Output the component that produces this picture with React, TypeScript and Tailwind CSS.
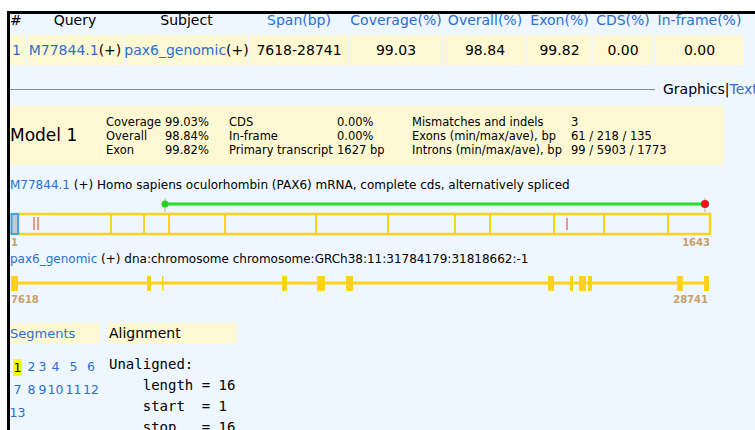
import type { ReactNode } from "react"

const LINK = "text-[#2c6fd1]"
const GOLD = "#ffd21a"

type Col = { w: string; head: string; headBlue: boolean; left?: boolean; cell: ReactNode }

const columns: Col[] = [
  { w: "w-[15px]", head: "#", headBlue: false, left: true, cell: <span className={LINK}>1</span> },
  {
    w: "w-[96px]",
    head: "Query",
    headBlue: false,
    cell: (
      <>
        <span className={LINK}>M77844.1</span>(+)
      </>
    ),
  },
  {
    w: "w-[123px]",
    head: "Subject",
    headBlue: false,
    cell: (
      <>
        <span className={LINK}>pax6_genomic</span>(+)
      </>
    ),
  },
  { w: "w-[98px]", head: "Span(bp)", headBlue: true, cell: "7618-28741" },
  { w: "w-[92px]", head: "Coverage(%)", headBlue: true, cell: "99.03" },
  { w: "w-[82px]", head: "Overall(%)", headBlue: true, cell: "98.84" },
  { w: "w-[63px]", head: "Exon(%)", headBlue: true, cell: "99.82" },
  { w: "w-[60px]", head: "CDS(%)", headBlue: true, cell: "0.00" },
  { w: "w-[89px]", head: "In-frame(%)", headBlue: true, cell: "0.00" },
]

// model summary, three rows of label/value pairs
const stats = [
  ["Coverage", "99.03%", "CDS", "0.00%", "Mismatches and indels", "3"],
  ["Overall", "98.84%", "In-frame", "0.00%", "Exons (min/max/ave), bp", "61 / 218 / 135"],
  ["Exon", "99.82%", "Primary transcript", "1627 bp", "Introns (min/max/ave), bp", "99 / 5903 / 1773"],
]

// exon boundaries on the mRNA bar (svg x)
const dividers = [101, 134, 159, 215, 306, 378, 445, 480, 544, 594, 658]

// exons on the genomic strip, [start, end] in svg x
const exons: [number, number][] = [
  [1, 8],
  [137, 141],
  [272, 277],
  [307, 315],
  [336, 343],
  [538, 544],
  [560, 563],
  [569, 576],
  [578, 582],
  [667, 673],
  [694, 699],
]

const segRows = [
  ["1", "2", "3", "4", "5", "6"],
  ["7", "8", "9", "10", "11", "12"],
  ["13"],
]
const segWidths = ["w-[15px]", "w-[13px]", "w-[9px]", "w-[17px]", "w-[19px]", "w-[16px]"]

function MrnaTrack() {
  return (
    <svg width="745" height="42" className="block">
      <line x1="155" y1="3" x2="155" y2="17" stroke="#d2d2d2" strokeWidth="2" />
      <line x1="695" y1="3" x2="695" y2="17" stroke="#d2d2d2" strokeWidth="2" />
      <line x1="155" y1="9" x2="695" y2="9" stroke="#22e022" strokeWidth="3" />
      <circle cx="155" cy="9" r="3.5" fill="#1fd41f" />
      <circle cx="695" cy="9" r="4" fill="#f01414" />
      <rect x="8" y="19" width="692" height="20" fill="none" stroke={GOLD} strokeWidth="2.5" />
      {dividers.map((x) => (
        <line key={x} x1={x} y1="19" x2={x} y2="39" stroke={GOLD} strokeWidth="2" />
      ))}
      <rect x="1.5" y="19" width="6.5" height="20" fill="#c4c9cf" stroke="#3aa5e8" strokeWidth="2" />
      <line x1="24" y1="22" x2="24" y2="35" stroke="#f07a55" strokeWidth="1.5" />
      <line x1="28" y1="22" x2="28" y2="35" stroke="#f07a55" strokeWidth="1.5" />
      <line x1="557" y1="23" x2="557" y2="35" stroke="#f07a55" strokeWidth="1.5" />
    </svg>
  )
}

function GenomicTrack() {
  return (
    <svg width="745" height="25" className="block">
      <line x1="1" y1="14" x2="697" y2="14" stroke={GOLD} strokeWidth="3" />
      {exons.map(([a, b]) => (
        <rect key={a} x={a} y="7" width={b - a} height="15" fill={GOLD} />
      ))}
      <rect x="152" y="7" width="1.5" height="15" fill={GOLD} />
    </svg>
  )
}

export default function App() {
  return (
    <div className="w-[755px] h-[430px] overflow-hidden bg-white font-['DejaVu_Sans','Verdana',sans-serif] text-black">
      <div className="ml-[7px] mt-[11px] h-[419px] border-l-[3px] border-t-[3px] border-black bg-[#eef6ff]">
        {/* hit table */}
        <div className="flex gap-[2px] h-[21px] text-[14px] leading-[13px]">
          {columns.map((c) => (
            <div
              key={c.head}
              className={`${c.w} shrink-0 whitespace-nowrap ${c.left ? "text-left" : "text-center"} ${
                c.headBlue ? LINK : ""
              }`}
            >
              {c.head}
            </div>
          ))}
        </div>
        <div className="flex gap-[2px] h-[30px] text-[14px]">
          {columns.map((c) => (
            <div
              key={c.head}
              className={`${c.w} shrink-0 whitespace-nowrap bg-[#fef9d2] flex items-center pt-[1px] ${
                c.left ? "justify-start pl-[2px]" : "justify-center"
              }`}
            >
              {c.cell}
            </div>
          ))}
        </div>

        {/* view switch */}
        <div className="mt-[14px] h-[20px] flex items-center whitespace-nowrap text-[14px]">
          <div className="w-[645px] h-px bg-[#8a8a8a] shrink-0" />
          <span className="ml-[8px]">Graphics</span>
          <span>|</span>
          <span className={LINK}>Text</span>
        </div>

        {/* model summary */}
        <div className="mt-[7px] w-[714px] h-[59px] bg-[#fef9d2] flex items-center">
          <div className="w-[96px] shrink-0 text-[17px] leading-none">Model 1</div>
          <div className="grid grid-cols-[59px_64px_108px_75px_159px_auto] text-[11.5px] leading-[14px] whitespace-nowrap">
            {stats.flat().map((s, i) => (
              <div key={i}>{s}</div>
            ))}
          </div>
        </div>

        {/* transcript */}
        <div className="mt-[10px] h-[20px] leading-[20px] text-[12px] whitespace-nowrap">
          <span className={LINK}>M77844.1</span> (+) Homo sapiens oculorhombin (PAX6) mRNA, complete cds,
          alternatively spliced
        </div>
        <MrnaTrack />
        <div className="w-[700px] h-[12px] flex justify-between items-center text-[10px] font-bold text-[#c9a06a] leading-none">
          <span className="pl-[1px]">1</span>
          <span>1643</span>
        </div>

        {/* genomic */}
        <div className="h-[20px] leading-[20px] text-[12px] whitespace-nowrap">
          <span className={LINK}>pax6_genomic</span> (+) dna:chromosome chromosome:GRCh38:11:31784179:31818662:-1
        </div>
        <GenomicTrack />
        <div className="w-[698px] h-[12px] flex justify-between items-center text-[10px] font-bold text-[#c9a06a] leading-none">
          <span className="pl-[1px]">7618</span>
          <span>28741</span>
        </div>

        {/* segments and alignment */}
        <div className="mt-[17px] flex gap-[8px]">
          <div className="w-[90px] shrink-0">
            <div className={`h-[21px] bg-[#fef9d2] flex items-center text-[13px] ${LINK}`}>Segments</div>
            <div className="mt-[12px] text-[12.5px]">
              {segRows.map((row, r) => (
                <div key={r} className="flex h-[23px] items-center">
                  {row.map((n, i) => (
                    <div key={n} className={`${segWidths[i]} shrink-0 flex justify-center`}>
                      {n === "1" ? (
                        <span className="bg-[#ffff00] px-[1px] h-[17px] leading-[17px] inline-block">1</span>
                      ) : (
                        <span className={LINK}>{n}</span>
                      )}
                    </div>
                  ))}
                </div>
              ))}
            </div>
          </div>
          <div>
            <div className="w-[129px] h-[21px] bg-[#fef9d2] flex items-center pl-[1px] text-[14px]">Alignment</div>
            <pre className="mt-[10px] pl-[1px] font-['DejaVu_Sans_Mono',monospace] text-[14px] leading-[21px]">
              {"Unaligned:\n    length = 16\n    start  = 1\n    stop   = 16"}
            </pre>
          </div>
        </div>
      </div>
    </div>
  )
}
